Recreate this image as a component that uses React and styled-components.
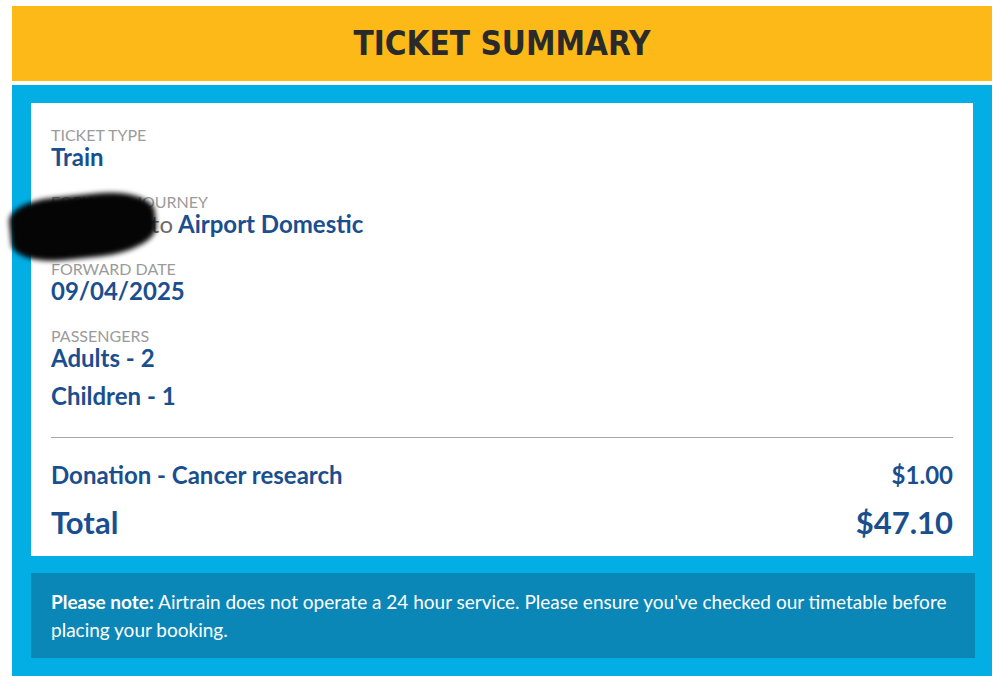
import React from "react";
import styled, { createGlobalStyle } from "styled-components";

const GlobalStyle = createGlobalStyle`
  html, body {
    margin: 0;
    padding: 0;
    background: #ffffff;
  }
  body {
    font-family: Lato, "Open Sans", "Noto Sans", sans-serif;
  }
`;

const Page = styled.div`
  width: 1000px;
  height: 698px;
  box-sizing: border-box;
  padding: 6px 8px 0 12px;
  display: flex;
  flex-direction: column;
`;

const Header = styled.header`
  height: 75px;
  background: #fdb917;
  display: flex;
  align-items: center;
  justify-content: center;
`;

const Title = styled.h1`
  margin: 0;
  font-family: "DejaVu Sans Condensed", "DejaVu Sans", sans-serif;
  font-weight: 700;
  font-size: 33px;
  color: #2a2a2a;
  line-height: 1;
`;

const Panel = styled.section`
  margin-top: 4px;
  background: #03aee5;
  padding: 18px 17px 18px 19px;
  display: flex;
  flex-direction: column;
  gap: 17px;
`;

const Card = styled.div`
  position: relative;
  background: #ffffff;
  margin-right: 2px;
  padding: 22px 20px 16px 20px;
  display: flex;
  flex-direction: column;
`;

const Group = styled.div`
  display: flex;
  flex-direction: column;
  & + & {
    margin-top: 22px;
  }
`;

const Label = styled.div`
  font-size: 16px;
  line-height: 19px;
  color: #9b9b9b;
  text-transform: uppercase;
`;

const Value = styled.div`
  font-size: 24px;
  line-height: 26px;
  font-weight: 700;
  color: #1a4f8f;
  & + & {
    margin-top: 12px;
  }
`;

const Connector = styled.span`
  font-weight: 400;
  color: #6c6c6c;
`;

const Hidden = styled.span`
  display: inline-block;
  width: 94px;
`;

const Redaction = styled.div`
  position: absolute;
  left: -21px;
  top: 92px;
  width: 146px;
  height: 63px;
  background: #050505;
  border-radius: 30% 38% 40% 34%;
  transform: rotate(-6deg);
  filter: blur(2.5px);
`;

const Divider = styled.hr`
  border: 0;
  border-top: 1px solid #a8a8a8;
  margin: 28px 0 23px 0;
`;

const Row = styled.div`
  display: flex;
  justify-content: space-between;
  align-items: baseline;
  font-weight: 700;
  color: #1a4f8f;
  font-size: ${(p) => (p.$big ? "31px" : "24px")};
  line-height: ${(p) => (p.$big ? "36px" : "28px")};
  margin-top: ${(p) => (p.$big ? "15px" : "0")};
`;

const Note = styled.div`
  background: #0b87b7;
  padding: 15px 20px 14px 20px;
  color: #ffffff;
  font-size: 19px;
  line-height: 28px;

  strong {
    font-weight: 700;
  }
`;

const App = () => {
  return (
    <Page>
      <GlobalStyle />
      <Header>
        <Title>TICKET SUMMARY</Title>
      </Header>
      <Panel>
        <Card>
          <Group>
            <Label>Ticket type</Label>
            <Value>Train</Value>
          </Group>
          <Group>
            <Label>Forward journey</Label>
            <Value>
              <Hidden /> <Connector>to</Connector> Airport Domestic
            </Value>
          </Group>
          <Group>
            <Label>Forward date</Label>
            <Value>09/04/2025</Value>
          </Group>
          <Group>
            <Label>Passengers</Label>
            <Value>Adults - 2</Value>
            <Value>Children - 1</Value>
          </Group>
          <Divider />
          <Row>
            <span>Donation - Cancer research</span>
            <span>$1.00</span>
          </Row>
          <Row $big>
            <span>Total</span>
            <span>$47.10</span>
          </Row>
          <Redaction />
        </Card>
        <Note>
          <strong>Please note:</strong> Airtrain does not operate a 24 hour
          service. Please ensure you've checked our timetable before placing
          your booking.
        </Note>
      </Panel>
    </Page>
  );
};

export default App;
